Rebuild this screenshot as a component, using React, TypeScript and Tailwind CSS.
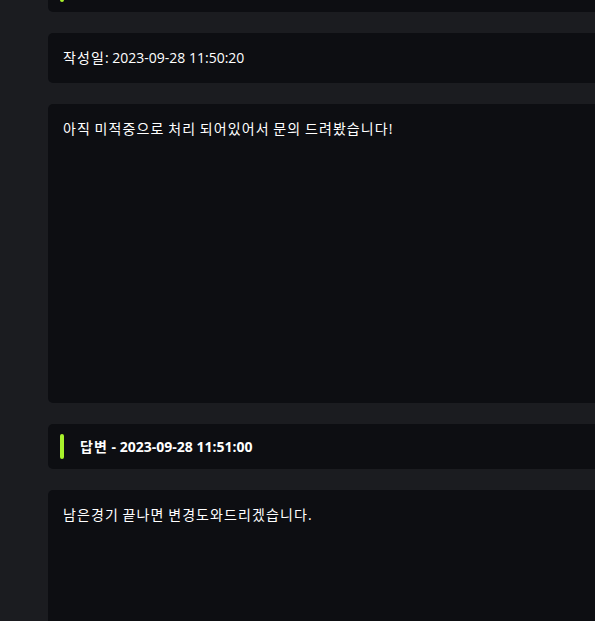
import React from "react";

const font = { fontFamily: '"Open Sans", "Noto Sans CJK KR", sans-serif' };

function Ko({ text }: { text: string }) {
  const parts = text.split(/([\uAC00-\uD7A3]+)/);
  return (
    <>
      {parts.map((p, i) =>
        /[\uAC00-\uD7A3]/.test(p) ? (
          <span key={i} className="tracking-[1.1px]">
            {p}
          </span>
        ) : (
          <span key={i}>{p}</span>
        )
      )}
    </>
  );
}

function TitleCard({ text }: { text?: string }) {
  return (
    <div className="flex h-[45px] items-center rounded-[5px] bg-[#0d0e12] pl-[12px]">
      <div className="h-[25px] w-[4px] rounded-[2px] bg-[#a8f12b]" />
      {text ? (
        <div className="ml-[16px] text-[14px] font-bold leading-5 text-white">
          <Ko text={text} />
        </div>
      ) : null}
    </div>
  );
}

function TextCard({ text, tall }: { text: string; tall?: boolean }) {
  return (
    <div
      className={
        tall
          ? "h-[299px] rounded-[5px] bg-[#0d0e12] px-[15px] py-[15px] text-[14px] leading-5 text-white"
          : "rounded-[5px] bg-[#0d0e12] px-[15px] py-[15px] text-[14px] leading-5 text-white"
      }
    >
      <Ko text={text} />
    </div>
  );
}

export default function App() {
  return (
    <div className="h-[621px] w-[595px] overflow-hidden bg-[#1b1c20]" style={font}>
      <div className="ml-[48px] mt-[-33px] flex w-[600px] flex-col gap-[21px]">
        <TitleCard />
        <TextCard text="작성일: 2023-09-28 11:50:20" />
        <TextCard text="아직 미적중으로 처리 되어있어서 문의 드려봤습니다!" tall />
        <TitleCard text="답변 - 2023-09-28 11:51:00" />
        <TextCard text="남은경기 끝나면 변경도와드리겠습니다." tall />
      </div>
    </div>
  );
}
